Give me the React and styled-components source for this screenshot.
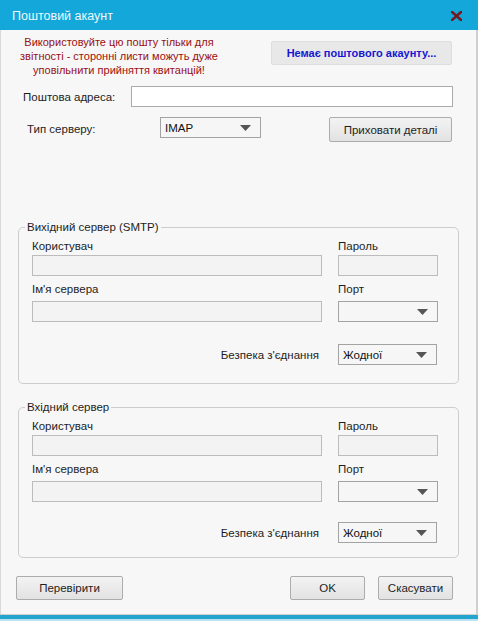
import React from 'react'
import styled, { createGlobalStyle } from 'styled-components'

const GlobalStyle = createGlobalStyle`
  html, body {
    margin: 0;
    padding: 0;
    background: #ffffff;
    overflow: hidden;
  }
  * {
    box-sizing: border-box;
  }
`

function Arrow() {
  return (
    <svg width='11' height='6' viewBox='0 0 11 6'>
      <path d='M0 0 L11 0 L5.5 6 Z' fill='#555' />
    </svg>
  )
}

function Dropdown({ value, width }) {
  return (
    <Select $width={width}>
      <span>{value}</span>
      <Arrow />
    </Select>
  )
}

function ServerGroup({ title, loose }) {
  return (
    <Group $loose={loose}>
      <Legend>{title}</Legend>
      <GroupGrid $loose={loose}>
        <FieldLabel>Користувач</FieldLabel>
        <FieldLabel>Пароль</FieldLabel>
        <FieldInput />
        <FieldInput />
        <FieldLabel $second>Ім'я сервера</FieldLabel>
        <FieldLabel $second>Порт</FieldLabel>
        <FieldInput />
        <Dropdown value='' width={100} />
        <SecurityLabel $loose={loose}>Безпека з'єднання</SecurityLabel>
        <SecuritySelect $loose={loose}>
          <Dropdown value='Жодної' width={99} />
        </SecuritySelect>
      </GroupGrid>
    </Group>
  )
}

function App() {
  return (
    <Window>
      <GlobalStyle />
      <TitleBar>
        <Title>Поштовий акаунт</Title>
        <svg width='11' height='10' viewBox='0 0 11 10'>
          <path d='M1 1 L10 9 M10 1 L1 9' stroke='#761820' strokeWidth='2.6' strokeLinecap='square' />
        </svg>
      </TitleBar>
      <Body>
        <TopRow>
          <Warning>
            Використовуйте цю пошту тільки для звітності - сторонні листи можуть дуже
            уповільнити прийняття квитанцій!
          </Warning>
          <LinkButton>Немає поштового акаунту...</LinkButton>
        </TopRow>
        <EmailRow>
          <RowLabel $width={108} $offset={5}>Поштова адреса:</RowLabel>
          <EmailInput />
        </EmailRow>
        <TypeRow>
          <RowLabel $width={133} $offset={9}>Тип серверу:</RowLabel>
          <Dropdown value='IMAP' width={101} />
          <Spacer />
          <Button $width={123} $height={25}>Приховати деталі</Button>
        </TypeRow>
        <ServerGroup title='Вихідний сервер (SMTP)' loose />
        <ServerGroup title='Вхідний сервер' />
        <Footer>
          <Button $width={107}>Перевірити</Button>
          <Spacer />
          <Button $width={75}>OK</Button>
          <Button $width={75}>Скасувати</Button>
        </Footer>
      </Body>
      <BottomEdge />
    </Window>
  )
}

const Window = styled.div`
  width: 478px;
  height: 621px;
  display: flex;
  flex-direction: column;
  font-family: 'Liberation Sans', Arial, sans-serif;
  font-size: 11px;
  color: #1e1e1e;
`

const TitleBar = styled.div`
  height: 30px;
  flex: none;
  background: #14a7d9;
  display: flex;
  align-items: center;
  justify-content: space-between;
  padding: 1px 16px 0 12px;
`

const Title = styled.div`
  color: #eef8fc;
  font-size: 12.5px;
`

const Body = styled.div`
  flex: 1;
  background: #f7f7f7;
  border-left: 1px solid #d9d9d9;
  border-right: 2px solid #cfcfcf;
  padding: 5px 17px 0 17px;
  display: flex;
  flex-direction: column;
`

const BottomEdge = styled.div`
  height: 7px;
  flex: none;
  background: linear-gradient(#cfcfcf 0 1px, #24a5cf 1px 5px, #b9e3f1 5px);
`

const TopRow = styled.div`
  display: flex;
  justify-content: space-between;
  align-items: flex-start;
`

const Warning = styled.div`
  width: 206px;
  margin-left: -2px;
  text-align: center;
  color: #9a0f12;
  font-size: 11px;
  line-height: 14px;
`

const LinkButton = styled.div`
  width: 181px;
  height: 24px;
  margin: 6px 7px 0 0;
  background: #e8e8e8;
  border: 1px solid #dedede;
  border-radius: 2px;
  display: flex;
  align-items: center;
  justify-content: center;
  color: #1616d2;
  font-weight: bold;
  font-size: 11px;
`

const EmailRow = styled.div`
  display: flex;
  align-items: center;
  margin-top: 9px;
`

const TypeRow = styled.div`
  display: flex;
  align-items: flex-start;
  margin: 10px 7px 0 0;
`

const RowLabel = styled.div`
  width: ${(p) => p.$width}px;
  margin-left: ${(p) => p.$offset}px;
  font-size: 11.5px;
  line-height: 14px;
  padding-top: ${(p) => (p.$offset > 5 ? 5 : 0)}px;
`

const EmailInput = styled.div`
  width: 322px;
  height: 21px;
  background: #ffffff;
  border: 1px solid #ababab;
`

const Spacer = styled.div`
  flex: 1;
`

const Select = styled.div`
  width: ${(p) => p.$width}px;
  height: 21px;
  background: #f6f6f6;
  border: 1px solid #a3a3a3;
  display: flex;
  align-items: center;
  justify-content: space-between;
  padding: 0 9px 0 4px;
  font-size: 11.5px;
  color: #111;
`

const Button = styled.div`
  width: ${(p) => p.$width}px;
  height: ${(p) => p.$height || 24}px;
  background: linear-gradient(#f3f3f3, #e2e2e2);
  border: 1px solid #acacac;
  border-radius: 2px;
  display: flex;
  align-items: center;
  justify-content: center;
  font-size: 11.5px;
  color: #1e1e1e;
`

const Group = styled.fieldset`
  margin: ${(p) => (p.$loose ? '78px' : '16px')} 0 0 0;
  padding: 0 13px ${(p) => (p.$loose ? 18 : 14)}px 13px;
  border: 1px solid #cdcdcd;
  border-radius: 5px;
  min-width: 0;
`

const Legend = styled.legend`
  margin-left: -7px;
  padding: 0 2px;
  font-size: 11.5px;
  line-height: 14px;
  color: #1e1e1e;
`

const GroupGrid = styled.div`
  display: grid;
  grid-template-columns: 290px 100px;
  column-gap: 16px;
  padding-top: 5px;
`

const FieldLabel = styled.div`
  font-size: 11.5px;
  line-height: 14px;
  margin: ${(p) => (p.$second ? '6px 0 5px' : '0 0 2px')};
`

const FieldInput = styled.div`
  height: 21px;
  background: #f3f3f3;
  border: 1px solid #bcbcbc;
`

const SecurityLabel = styled.div`
  justify-self: end;
  align-self: center;
  margin: ${(p) => (p.$loose ? '22px' : '20px')} 3px 0 0;
  font-size: 11.5px;
`

const SecuritySelect = styled.div`
  margin-top: ${(p) => (p.$loose ? '22px' : '20px')};
`

const Footer = styled.div`
  display: flex;
  gap: 13px;
  margin: 18px 6px 0 -2px;
`

export default App
